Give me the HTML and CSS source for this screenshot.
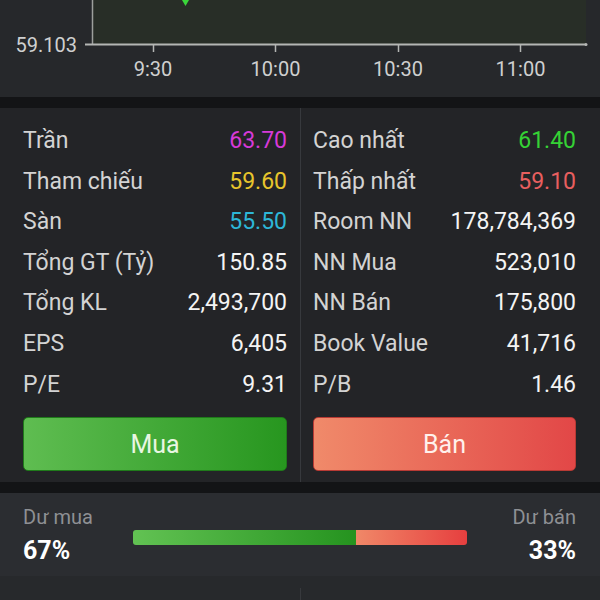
FILE: index.html
```html
<!DOCTYPE html>
<html lang="vi">
<head>
    <meta charset="UTF-8">
    <meta name="viewport" content="width=device-width, initial-scale=1.0">
    <title>Chi tiết cổ phiếu</title>
    <link rel="stylesheet" href="styles.css">
</head>
<body>
    <div class="page">
        <div class="chart">
            <svg class="chart-svg" width="600" height="97" viewBox="0 0 600 97">
                <rect x="92" y="0" width="494" height="44" fill="#282e27"/>
                <line x1="92.5" y1="0" x2="92.5" y2="44" stroke="#9c9f9c" stroke-width="1.5"/>
                <line x1="85" y1="44.5" x2="586" y2="44.5" stroke="#b4b6b4" stroke-width="2"/>
                <circle cx="586" cy="44.5" r="1.5" fill="#b4b6b4"/>
                <line x1="153.5" y1="45" x2="153.5" y2="52" stroke="#b4b6b4" stroke-width="1.5"/>
                <line x1="275.5" y1="45" x2="275.5" y2="52" stroke="#b4b6b4" stroke-width="1.5"/>
                <line x1="398.5" y1="45" x2="398.5" y2="52" stroke="#b4b6b4" stroke-width="1.5"/>
                <line x1="520.5" y1="45" x2="520.5" y2="52" stroke="#b4b6b4" stroke-width="1.5"/>
                <path d="M182 0 L189 0 L185.5 6 Z" fill="#3ad63a"/>
                <text class="axis-label" x="77" y="52" text-anchor="end">59.103</text>
                <text class="axis-label" x="153" y="76" text-anchor="middle">9:30</text>
                <text class="axis-label" x="275.5" y="76" text-anchor="middle">10:00</text>
                <text class="axis-label" x="398" y="76" text-anchor="middle">10:30</text>
                <text class="axis-label" x="520.5" y="76" text-anchor="middle">11:00</text>
            </svg>
        </div>

        <div class="stats">
            <div class="stats-col left">
                <div class="row"><span class="label">Trần</span><span class="value ceil">63.70</span></div>
                <div class="row"><span class="label">Tham chiếu</span><span class="value ref">59.60</span></div>
                <div class="row"><span class="label">Sàn</span><span class="value floor">55.50</span></div>
                <div class="row"><span class="label">Tổng GT (Tỷ)</span><span class="value">150.85</span></div>
                <div class="row"><span class="label">Tổng KL</span><span class="value">2,493,700</span></div>
                <div class="row"><span class="label">EPS</span><span class="value">6,405</span></div>
                <div class="row"><span class="label">P/E</span><span class="value">9.31</span></div>
                <button class="btn buy">Mua</button>
            </div>
            <div class="stats-col right">
                <div class="row"><span class="label">Cao nhất</span><span class="value up">61.40</span></div>
                <div class="row"><span class="label">Thấp nhất</span><span class="value down">59.10</span></div>
                <div class="row"><span class="label">Room NN</span><span class="value">178,784,369</span></div>
                <div class="row"><span class="label">NN Mua</span><span class="value">523,010</span></div>
                <div class="row"><span class="label">NN Bán</span><span class="value">175,800</span></div>
                <div class="row"><span class="label">Book Value</span><span class="value">41,716</span></div>
                <div class="row"><span class="label">P/B</span><span class="value">1.46</span></div>
                <button class="btn sell">Bán</button>
            </div>
        </div>

        <div class="balance">
            <div class="side">
                <div class="side-label">Dư mua</div>
                <div class="side-value">67%</div>
            </div>
            <div class="bar">
                <div class="bar-buy" style="width: 67%"></div>
                <div class="bar-sell"></div>
            </div>
            <div class="side sell-side">
                <div class="side-label">Dư bán</div>
                <div class="side-value">33%</div>
            </div>
        </div>

        <div class="bottom">
            <div class="bottom-col"></div>
            <div class="bottom-col divided"></div>
        </div>
    </div>
</body>
</html>
```

FILE: styles.css
```css
body {
    margin: 0;
    background: #131416;
    font-family: Roboto, 'Noto Sans', sans-serif;
    color: #f2f2f2;
    overflow: hidden;
}
.page {
    width: 600px;
    height: 600px;
    display: flex;
    flex-direction: column;
}
.chart {
    height: 97px;
    background: #26282b;
    margin-bottom: 11px;
}
.chart-svg {
    display: block;
}
.axis-label {
    font-family: Roboto, sans-serif;
    font-size: 20px;
    fill: #cfd0d0;
}
.stats {
    height: 374px;
    background: #232427;
    display: grid;
    grid-template-columns: 300px 300px;
    margin-bottom: 11px;
}
.stats-col {
    display: flex;
    flex-direction: column;
    padding-top: 13px;
}
.stats-col.left {
    padding-left: 23px;
    padding-right: 13px;
}
.stats-col.right {
    padding-left: 12px;
    padding-right: 24px;
    border-left: 1px solid #37393d;
}
.row {
    display: flex;
    justify-content: space-between;
    height: 40.6px;
    line-height: 40.6px;
    font-size: 23px;
}
.label {
    color: #d3d3d3;
}
.value {
    color: #f4f4f4;
}
.value.ceil { color: #d63ad8; }
.value.ref { color: #e8c52c; }
.value.floor { color: #2db7d8; }
.value.up { color: #35d235; }
.value.down { color: #e85f5f; }
.btn {
    margin-top: 12px;
    height: 54px;
    border-radius: 5px;
    font-family: Roboto, sans-serif;
    font-size: 25px;
    cursor: pointer;
}
.btn.buy {
    background: linear-gradient(90deg, #5fbd51, #27961f);
    border: 1px solid #1f7a1a;
    color: #e9f6e2;
}
.btn.sell {
    background: linear-gradient(90deg, #f08a6a, #e24747);
    border: 1px solid #b83a34;
    color: #fff1ec;
}
.balance {
    height: 83px;
    box-sizing: border-box;
    background: #2b2d31;
    padding: 11px 24px 8px 23px;
    display: grid;
    grid-template-columns: 1fr 334px 1fr;
}
.side-label {
    font-size: 20px;
    line-height: 26px;
    color: #8e9094;
}
.side-value {
    margin-top: 4px;
    font-size: 25px;
    line-height: 34px;
    font-weight: 700;
    color: #ffffff;
}
.sell-side {
    text-align: right;
}
.bar {
    align-self: center;
    height: 15px;
    margin-top: 2px;
    display: flex;
    border-radius: 3px;
    overflow: hidden;
}
.bar-buy {
    background: linear-gradient(90deg, #62c253, #25931f);
}
.bar-sell {
    flex: 1;
    background: linear-gradient(90deg, #f08868, #e63f3f);
}
.bottom {
    flex: 1;
    background: #27292c;
    display: grid;
    grid-template-columns: 300px 300px;
    padding-top: 12px;
}
.bottom-col.divided {
    border-left: 1px solid #37393d;
}
```
